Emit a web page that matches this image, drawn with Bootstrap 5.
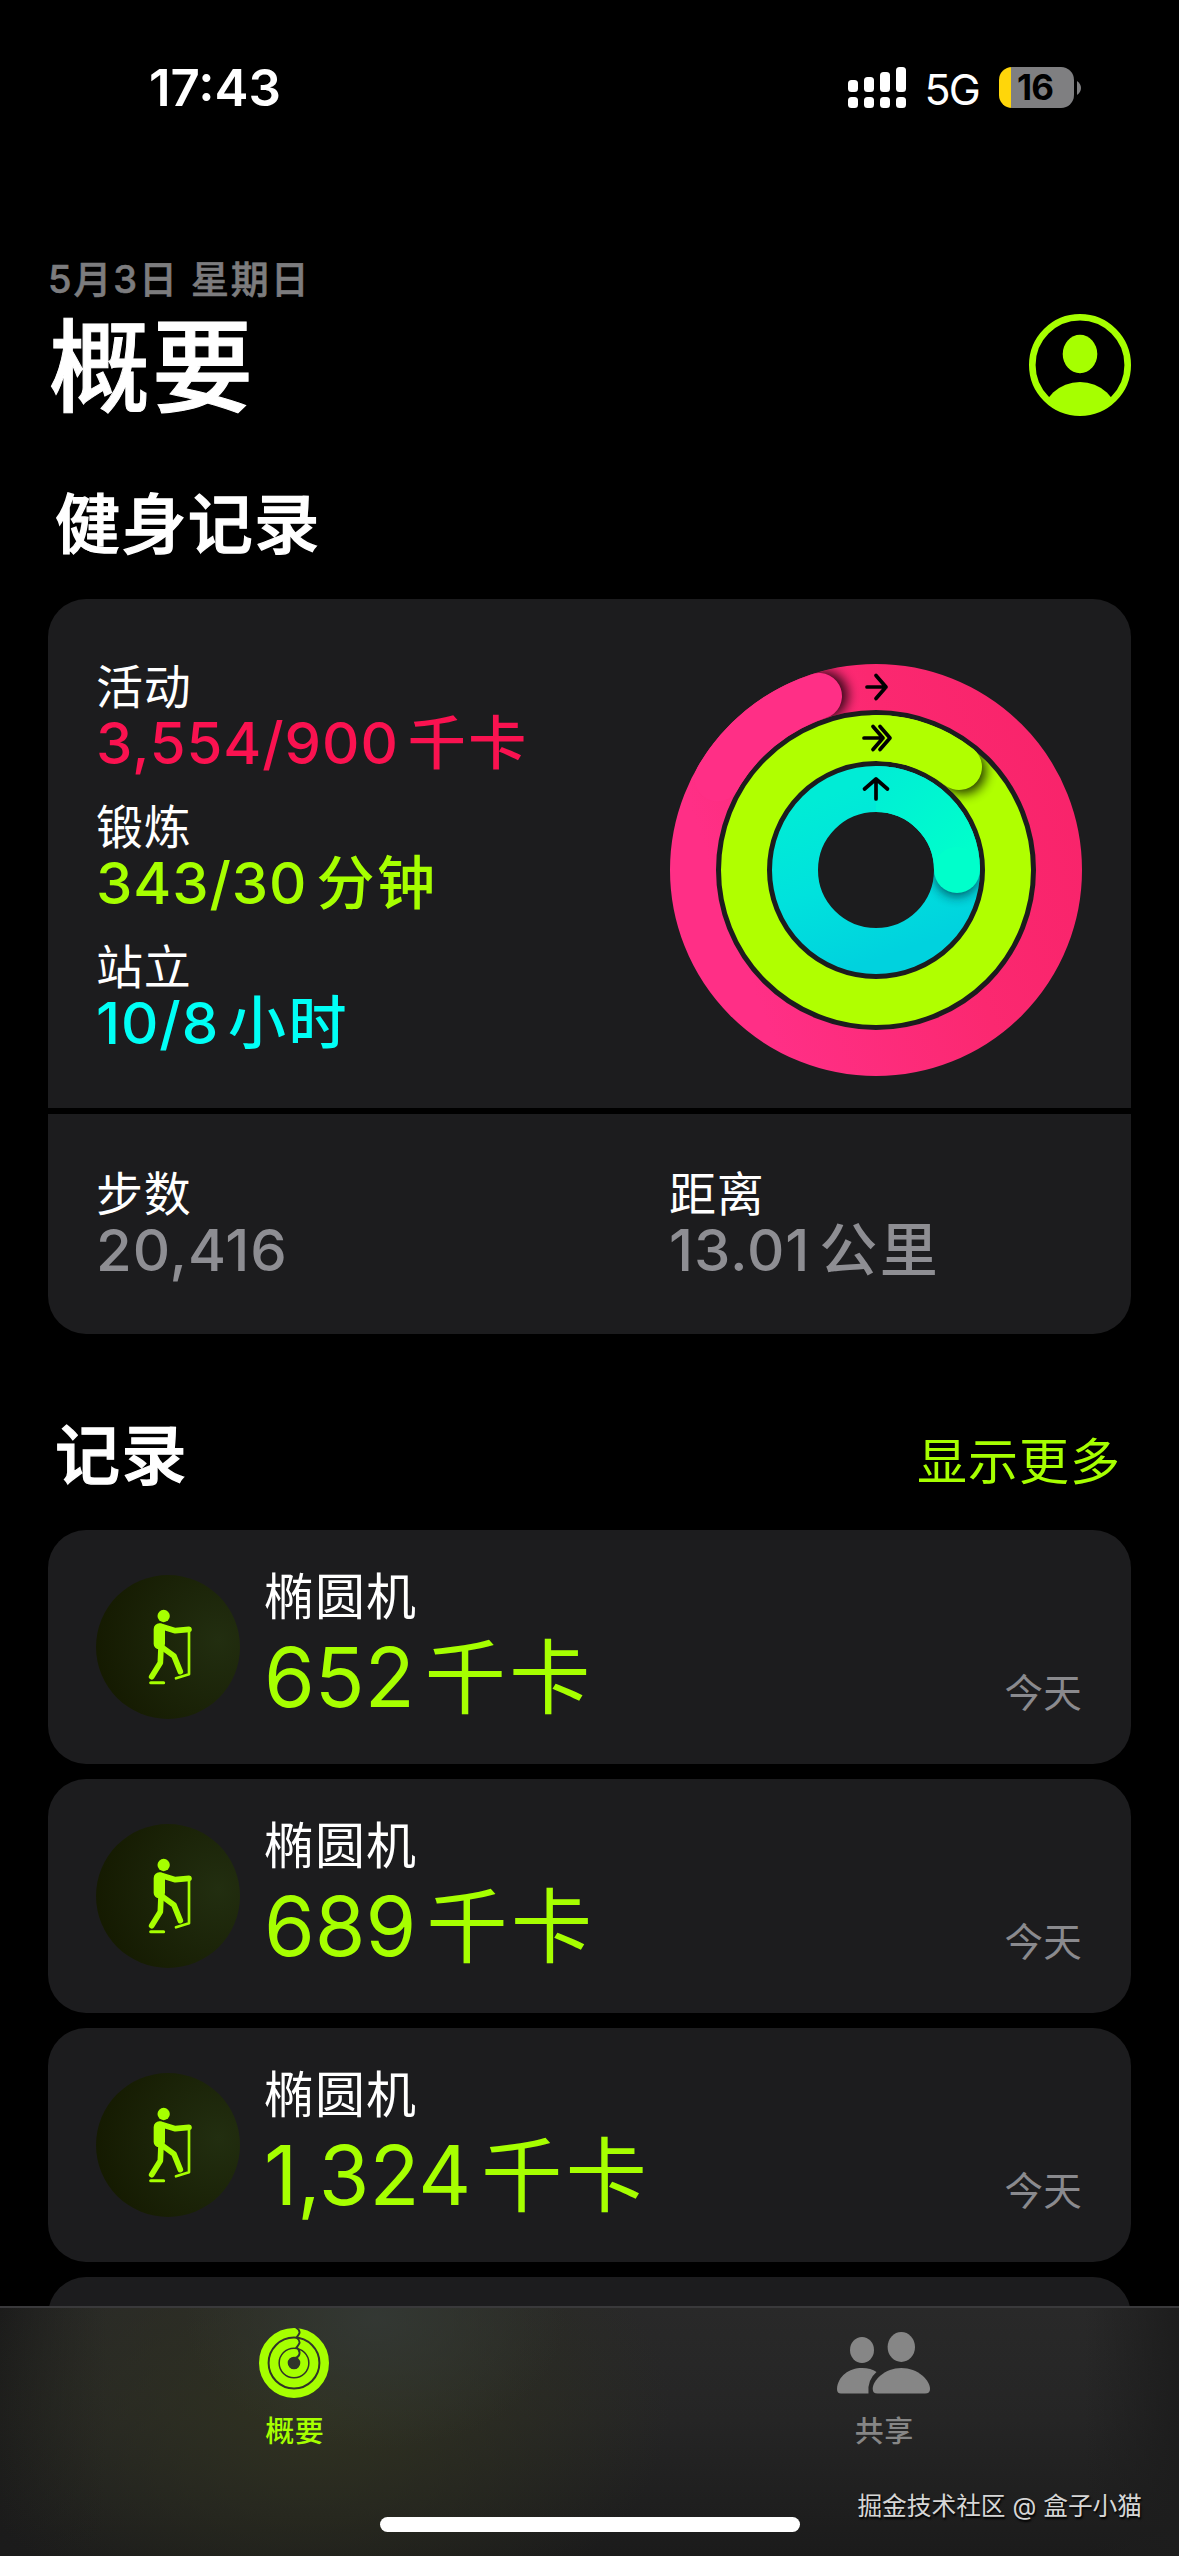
<!DOCTYPE html>
<html lang="zh-CN" data-bs-theme="dark">
<head>
<meta charset="utf-8">
<meta name="viewport" content="width=device-width, initial-scale=1">
<title>概要</title>
<link href="https://cdn.jsdelivr.net/npm/bootstrap@5.3.0/dist/css/bootstrap.min.css" rel="stylesheet">
<style>
:root{--lime:#a6ff00;--panel:#1c1c1e}
html,body{height:100%}
body{background:#000;color:#fff;font-family:Inter,"Noto Sans CJK SC",sans-serif;overflow:hidden;-webkit-font-smoothing:antialiased}
svg{display:block;flex:none}
.phone{width:1179px;height:2556px;overflow:hidden}
.statusbar{height:175px;padding:0 97px 0 149px;align-items:center}
.clock{font-size:51px;font-weight:600;line-height:60px;letter-spacing:0}
.net{font-size:43px;line-height:50px;font-weight:400;letter-spacing:-1.8px;margin:3px 20px 0 18px}
.battery{width:75px;height:41px;border-radius:13px;background:linear-gradient(90deg,#ffd60a 12px,#7f7f81 12px);color:#000;font-size:35px;font-weight:700;line-height:41px;text-align:center;letter-spacing:-1px;padding-right:3px}
.page{padding:82px 48px 0}
.today-line{font-size:38px;line-height:44px;font-weight:500;color:#7c7c7e;letter-spacing:1.9px;-webkit-text-stroke:.6px #7c7c7e}
.hero{height:126px;margin-top:1px}
.hero h1{font-size:101px;line-height:126px;font-weight:500;letter-spacing:2px;margin:0;padding:3px 0 0 1px;-webkit-text-stroke:1px #fff}
.sect{font-size:65px;line-height:80px;font-weight:500;letter-spacing:1.4px;margin:0;padding-left:7px;-webkit-text-stroke:1.3px #fff}
.sect-row{margin:57px 0 34px}
.sect-row.second{margin-top:82px}
.more{font-size:50px;line-height:80px;color:var(--lime);letter-spacing:1px;padding:6px 10px 0 0;height:80px}
.more:hover{color:var(--lime)}
.panel{background:var(--panel);border:0;padding-left:48px;padding-right:49px}
.panel-top{border-radius:38px 38px 0 0;height:509px;padding-top:60px}
.panel-bottom{border-radius:0 0 38px 38px;height:220px;padding-top:52px;margin-top:6px}
.metric{line-height:56px;margin-bottom:28px}
.metric .lbl{font-size:47px;letter-spacing:.8px}
.metric .val{font-size:58px;font-weight:500;letter-spacing:.9px}
.unit{font-size:58px;letter-spacing:2.5px;margin-left:9px}
.move{color:#fa1250}.exer{color:var(--lime)}.stand{color:#00fff6}.dim{color:#8e8e93}
.rings-box{margin-top:5px}
.half-a{width:573px}
.entry{background:var(--panel);border:0;border-radius:38px;height:234px;padding:0 49px 0 48px;margin-bottom:15px}
.entry-name{font-size:50px;line-height:60px;letter-spacing:1px}
.entry-val{font-size:82px;line-height:84px;color:var(--lime);margin-top:9px}
.entry-val .unit{font-size:81px;letter-spacing:3.5px;margin-left:10px}
.entry-body{padding:37px 0 0 24px}
.entry-day{font-size:38.500px;line-height:46px;color:#8a8a8e;margin-top:140px;letter-spacing:.3px}
.tabs{height:250px;width:1179px;right:auto;border-top:2px solid #39393b;
 background:radial-gradient(ellipse 190px 130px at 375px 10px,rgba(52,57,53,.9),transparent),radial-gradient(ellipse 360px 230px at 310px 100px,rgba(47,49,32,1),transparent),linear-gradient(90deg,#1b1b1b,transparent 9%,transparent 92%,#1d1d1d),linear-gradient(#292929,#252525 45%,#1b1b1b)}
.tab-item{font-size:29px;font-weight:500;line-height:40px;letter-spacing:.5px}
.tab-item span{margin-top:13px}
.homebar{width:420px;height:15px;border-radius:8px;background:#fff;left:380px;bottom:24px}
.sign{right:37px;bottom:33px;font-size:24.700px;line-height:34px;color:#d6d6d6;text-shadow:1px 2px 2px #000;white-space:pre}
</style>
<script src="https://cdn.jsdelivr.net/npm/bootstrap@5.3.0/dist/js/bootstrap.bundle.min.js"></script>
</head>
<body>
<svg width="0" height="0" class="position-absolute" aria-hidden="true">
 <defs>
  <radialGradient id="disc" cx=".85" cy=".45" r=".9"><stop offset="0" stop-color="#222e10"/><stop offset="1" stop-color="#141900"/></radialGradient>
  <symbol id="walker" viewBox="52 44 432 432">
   <circle cx="268" cy="260" r="216" fill="url(#disc)"/>
   <g fill="none" stroke="#a6ff00" stroke-linecap="round" stroke-linejoin="round">
    <circle cx="255" cy="167" r="18.5" fill="#a6ff00" stroke="none"/>
    <path d="M242 206V250" stroke-width="34"/>
    <path d="M246 198L290 211L331 207" stroke-width="17"/>
    <path d="M247 262L245 307L219 349" stroke-width="17"/>
    <path d="M252 262L286 287L305 334" stroke-width="17"/>
    <path d="M331 207V342L292 354" stroke-width="8"/>
    <path d="M216 367H255" stroke-width="9"/>
   </g>
  </symbol>
 </defs>
</svg>
<div class="phone position-relative">
 <header class="statusbar d-flex">
  <div class="clock me-auto">17:43</div>
  <svg width="58" height="41" viewBox="0 0 58 41" fill="#fff">
   <rect y="13" width="10" height="12" rx="3.5"/><rect x="16" y="10" width="10" height="15" rx="3.5"/><rect x="32" y="5" width="10" height="20" rx="3.5"/><rect x="48" width="10" height="25" rx="3.5"/>
   <rect y="30" width="10" height="11" rx="3.5"/><rect x="16" y="30" width="10" height="11" rx="3.5"/><rect x="32" y="30" width="10" height="11" rx="3.5"/><rect x="48" y="30" width="10" height="11" rx="3.5"/>
  </svg>
  <div class="net">5G</div>
  <div class="battery">16</div>
  <svg width="8" height="14" viewBox="0 0 8 14"><path d="M3 0Q7 3 7 7T3 14Z" fill="#7f7f81"/></svg>
 </header>

 <main class="page">
  <div class="today-line">5月3日 星期日</div>
  <div class="hero d-flex justify-content-between align-items-center">
   <h1>概要</h1>
   <svg width="102" height="102" viewBox="0 0 102 102">
    <defs><clipPath id="face"><circle cx="51" cy="51" r="50"/></clipPath></defs>
    <circle cx="51" cy="51" r="47.7" fill="none" stroke="#a6ff00" stroke-width="6.6"/>
    <ellipse cx="51" cy="40" rx="17.3" ry="19.2" fill="#a6ff00"/>
    <ellipse cx="51" cy="104" rx="38" ry="36" fill="#a6ff00" clip-path="url(#face)"/>
   </svg>
  </div>

  <div class="sect-row"><h2 class="sect">健身记录</h2></div>
  <section>
   <div class="panel panel-top d-flex justify-content-between">
    <div>
     <div class="metric"><div class="lbl">活动</div><div class="val move">3,554/900<span class="unit">千卡</span></div></div>
     <div class="metric"><div class="lbl">锻炼</div><div class="val exer">343/30<span class="unit">分钟</span></div></div>
     <div class="metric"><div class="lbl">站立</div><div class="val stand">10/8<span class="unit">小时</span></div></div>
    </div>
    <svg class="rings-box" width="412" height="412" viewBox="-206 -206 412 412">
     <defs>
      <linearGradient id="gm" x1="1" y1="0" x2="0" y2=".35"><stop offset="0" stop-color="#f8236a"/><stop offset=".45" stop-color="#fb2870"/><stop offset="1" stop-color="#ff2f86"/></linearGradient>
      <linearGradient id="gs" x1=".3" y1="0" x2=".65" y2="1"><stop offset="0" stop-color="#00ecd6"/><stop offset=".5" stop-color="#00e2dd"/><stop offset="1" stop-color="#00d2de"/></linearGradient>
      <linearGradient id="gs2" gradientUnits="userSpaceOnUse" x1="-10" y1="-90" x2="80" y2="0"><stop offset="0" stop-color="#00edd6"/><stop offset="1" stop-color="#00ffcb"/></linearGradient>
      <filter id="soft" x="-50%" y="-50%" width="200%" height="200%"><feGaussianBlur stdDeviation="6"/></filter>
      <clipPath id="c1"><path clip-rule="evenodd" d="M-206 0a206 206 0 1 0 412 0a206 206 0 1 0-412 0ZM-160 0a160 160 0 1 0 320 0a160 160 0 1 0-320 0Z"/></clipPath>
      <clipPath id="c2"><path clip-rule="evenodd" d="M-155 0a155 155 0 1 0 310 0a155 155 0 1 0-310 0ZM-109 0a109 109 0 1 0 218 0a109 109 0 1 0-218 0Z"/></clipPath>
      <clipPath id="c3"><path clip-rule="evenodd" d="M-104 0a104 104 0 1 0 208 0a104 104 0 1 0-208 0ZM-58 0a58 58 0 1 0 116 0a58 58 0 1 0-116 0Z"/></clipPath>
     </defs>
     <g fill="none" stroke-width="46">
      <circle r="183" stroke="url(#gm)"/>
      <g clip-path="url(#c1)"><circle cx="-52" cy="-175" r="24" fill="#000" stroke="none" opacity=".8" filter="url(#soft)"/></g>
      <path d="M-158.5-91.5A183 183 0 0 1-57-174" stroke="#ff2f86" stroke-linecap="round"/>
      <circle r="132" stroke="#b0ff00"/>
      <g clip-path="url(#c2)"><circle cx="87" cy="-99" r="23" fill="#000" stroke="none" opacity=".8" filter="url(#soft)"/></g>
      <path d="M0-132A132 132 0 0 1 83-103" stroke="#b0ff00" stroke-linecap="round"/>
      <circle r="81" stroke="url(#gs)"/>
      <g clip-path="url(#c3)"><circle cx="81" cy="4" r="22" fill="#002030" stroke="none" opacity=".75" filter="url(#soft)"/></g>
      <path d="M0-81A81 81 0 0 1 81 0" stroke="url(#gs2)" stroke-linecap="butt"/>
      <circle cx="81" r="23" fill="#00ffcb" stroke="none"/>
     </g>
     <g fill="none" stroke="#000" stroke-width="3.7" stroke-linecap="round" stroke-linejoin="round">
      <path d="M-9-183H10M0-194.500L10-183L0-171.500"/>
      <path d="M-12-132H7M-3-143.500L7-132L-3-120.500M4-143.500L14-132L4-120.500"/>
      <path d="M0-71V-91M-11.500-81L0-91L11.500-81"/>
     </g>
    </svg>
   </div>
   <div class="panel panel-bottom d-flex">
    <div class="half-a metric"><div class="lbl">步数</div><div class="val dim">20,416</div></div>
    <div class="metric"><div class="lbl">距离</div><div class="val dim">13.01<span class="unit">公里</span></div></div>
   </div>
  </section>

  <div class="sect-row second d-flex justify-content-between">
   <h2 class="sect">记录</h2>
   <a class="more text-decoration-none" href="#">显示更多</a>
  </div>
  <section>
   <div class="entry card flex-row align-items-start">
    <svg class="align-self-center" width="144" height="144"><use href="#walker"/></svg>
    <div class="entry-body me-auto"><div class="entry-name">椭圆机</div><div class="entry-val">652<span class="unit">千卡</span></div></div>
    <div class="entry-day">今天</div>
   </div>
   <div class="entry card flex-row align-items-start">
    <svg class="align-self-center" width="144" height="144"><use href="#walker"/></svg>
    <div class="entry-body me-auto"><div class="entry-name">椭圆机</div><div class="entry-val">689<span class="unit">千卡</span></div></div>
    <div class="entry-day">今天</div>
   </div>
   <div class="entry card flex-row align-items-start">
    <svg class="align-self-center" width="144" height="144"><use href="#walker"/></svg>
    <div class="entry-body me-auto"><div class="entry-name">椭圆机</div><div class="entry-val">1,324<span class="unit">千卡</span></div></div>
    <div class="entry-day">今天</div>
   </div>
   <div class="entry card"></div>
  </section>
 </main>

 <nav class="tabs position-absolute bottom-0 start-0">
  <div class="row g-0">
   <div class="col-6 tab-item d-flex flex-column align-items-center" style="color:#a6ff00">
    <svg width="72" height="72" viewBox="-35 -36 72 72" style="margin-top:19px">
     <g fill="none" stroke="#a6ff00">
      <circle r="30.700" stroke-width="8.600"/><circle r="20" stroke-width="8.800"/><circle r="10.200" stroke-width="7.800"/>
     </g>
     <path d="M2-35.500Q6-33 5.500-30Q4-27 2.500-25.500Q6-23 5.500-20Q4-17 2.500-15.500Q6-13 5.500-9.500Q5-6 1-5" fill="none" stroke="#30342d" stroke-width="1.900"/>
    </svg>
    <span>概要</span>
   </div>
   <div class="col-6 tab-item d-flex flex-column align-items-center" style="color:#868686">
    <svg width="94" height="72" viewBox="0 0 94 72" fill="#868686" style="margin-top:19px">
     <ellipse cx="25" cy="23" rx="12" ry="13"/><ellipse cx="64.300" cy="20" rx="13.700" ry="15"/>
     <path d="M25 41Q34 41 39.500 45Q30 53 31.500 66.500H4Q0 66.500 0 62C1 49 12 41 25 41Z"/>
     <path d="M64.300 41C81 41 93 53 93 62Q93 66.500 88 66.500H40.500Q35.700 66.500 35.700 62C35.700 53 48 41 64.300 41Z"/>
    </svg>
    <span>共享</span>
   </div>
  </div>
  <div class="homebar position-absolute"></div>
  <div class="sign position-absolute">掘金技术社区 @ 盒子小猫</div>
 </nav>
</div>
</body>
</html>
